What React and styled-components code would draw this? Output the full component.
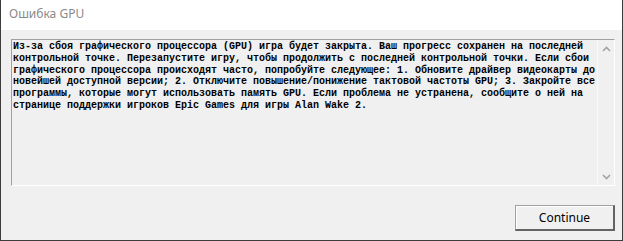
import React from 'react';
import styled, { createGlobalStyle } from 'styled-components';

const GlobalStyle = createGlobalStyle`
  html, body {
    margin: 0;
    padding: 0;
    background: #f0f0f0;
  }
`;

const MESSAGE =
  'Из-за сбоя графического процессора (GPU) игра будет закрыта. Ваш прогресс сохранен на последней ' +
  'контрольной точке. Перезапустите игру, чтобы продолжить с последней контрольной точки. Если сбои ' +
  'графического процессора происходят часто, попробуйте следующее: 1. Обновите драйвер видеокарты до ' +
  'новейшей доступной версии; 2. Отключите повышение/понижение тактовой частоты GPU; 3. Закройте все ' +
  'программы, которые могут использовать память GPU. Если проблема не устранена, сообщите о ней на ' +
  'странице поддержки игроков Epic Games для игры Alan Wake 2.';

const ArrowIcon = ({ down }) => (
  <svg width="9" height="6" viewBox="0 0 9 6">
    <path
      d={down ? 'M1 1 L4.5 4.5 L8 1' : 'M1 5 L4.5 1.5 L8 5'}
      fill="none"
      stroke="#a3a3a3"
      strokeWidth="1.6"
    />
  </svg>
);

const App = () => {
  return (
    <>
      <GlobalStyle />
      <Window>
        <TitleBar>
          <Title>Ошибка GPU</Title>
        </TitleBar>
        <Body>
          <MessageBox>
            <MessageText>{MESSAGE}</MessageText>
            <ScrollTrack>
              <ArrowButton><ArrowIcon /></ArrowButton>
              <ArrowButton><ArrowIcon down /></ArrowButton>
            </ScrollTrack>
          </MessageBox>
          <Footer>
            <DialogButton>Continue</DialogButton>
          </Footer>
        </Body>
      </Window>
    </>
  );
};

const Window = styled.div`
  width: 623px;
  height: 241px;
  box-sizing: border-box;
  display: flex;
  flex-direction: column;
  background: #f0f0f0;
  border-left: 1px solid #3c3c3c;
  border-right: 1px solid #3c3c3c;
  border-bottom: 1px solid #3c3c3c;
`;

const TitleBar = styled.div`
  height: 30px;
  flex-shrink: 0;
  background: #ffffff;
  display: flex;
  align-items: center;
  padding-left: 8px;
`;

const Title = styled.span`
  font-family: 'Noto Sans', 'Open Sans', sans-serif;
  font-size: 12px;
  color: #8a8a8a;
  margin-top: -3px;
`;

const Body = styled.div`
  flex: 1;
  display: flex;
  flex-direction: column;
  padding: 9px 7px 0 10px;
`;

const MessageBox = styled.div`
  height: 147px;
  box-sizing: border-box;
  display: flex;
  border-top: 1px solid #a0a0a0;
  border-left: 1px solid #a0a0a0;
  border-bottom: 1px solid #ffffff;
  border-right: 1px solid #ffffff;
  background: #f0f0f0;
`;

const MessageText = styled.div`
  flex: 1;
  padding: 1px 0 0 1px;
  font-family: 'Liberation Mono', 'Courier New', monospace;
  font-size: 10px;
  font-weight: bold;
  line-height: 11.8px;
  color: #000000;
  white-space: pre-wrap;
  word-wrap: break-word;
`;

const ScrollTrack = styled.div`
  width: 17px;
  flex-shrink: 0;
  display: flex;
  flex-direction: column;
  justify-content: space-between;
  border-left: 1px solid #f8f8f8;
  box-sizing: border-box;
`;

const ArrowButton = styled.div`
  height: 17px;
  display: flex;
  align-items: center;
  justify-content: center;
`;

const Footer = styled.div`
  display: flex;
  justify-content: flex-end;
  padding-top: 19px;
`;

const DialogButton = styled.button`
  width: 100px;
  height: 26px;
  margin-right: 0;
  box-sizing: border-box;
  font-family: 'Noto Sans', 'Open Sans', sans-serif;
  font-size: 12px;
  color: #000000;
  background: #f0f0f0;
  border-top: 1px solid #a0a0a0;
  border-left: 1px solid #a0a0a0;
  border-right: 2px solid #646464;
  border-bottom: 2px solid #646464;
  box-shadow: inset 1px 1px 0 #ffffff;
  padding: 0;
  cursor: pointer;
`;

export default App;
